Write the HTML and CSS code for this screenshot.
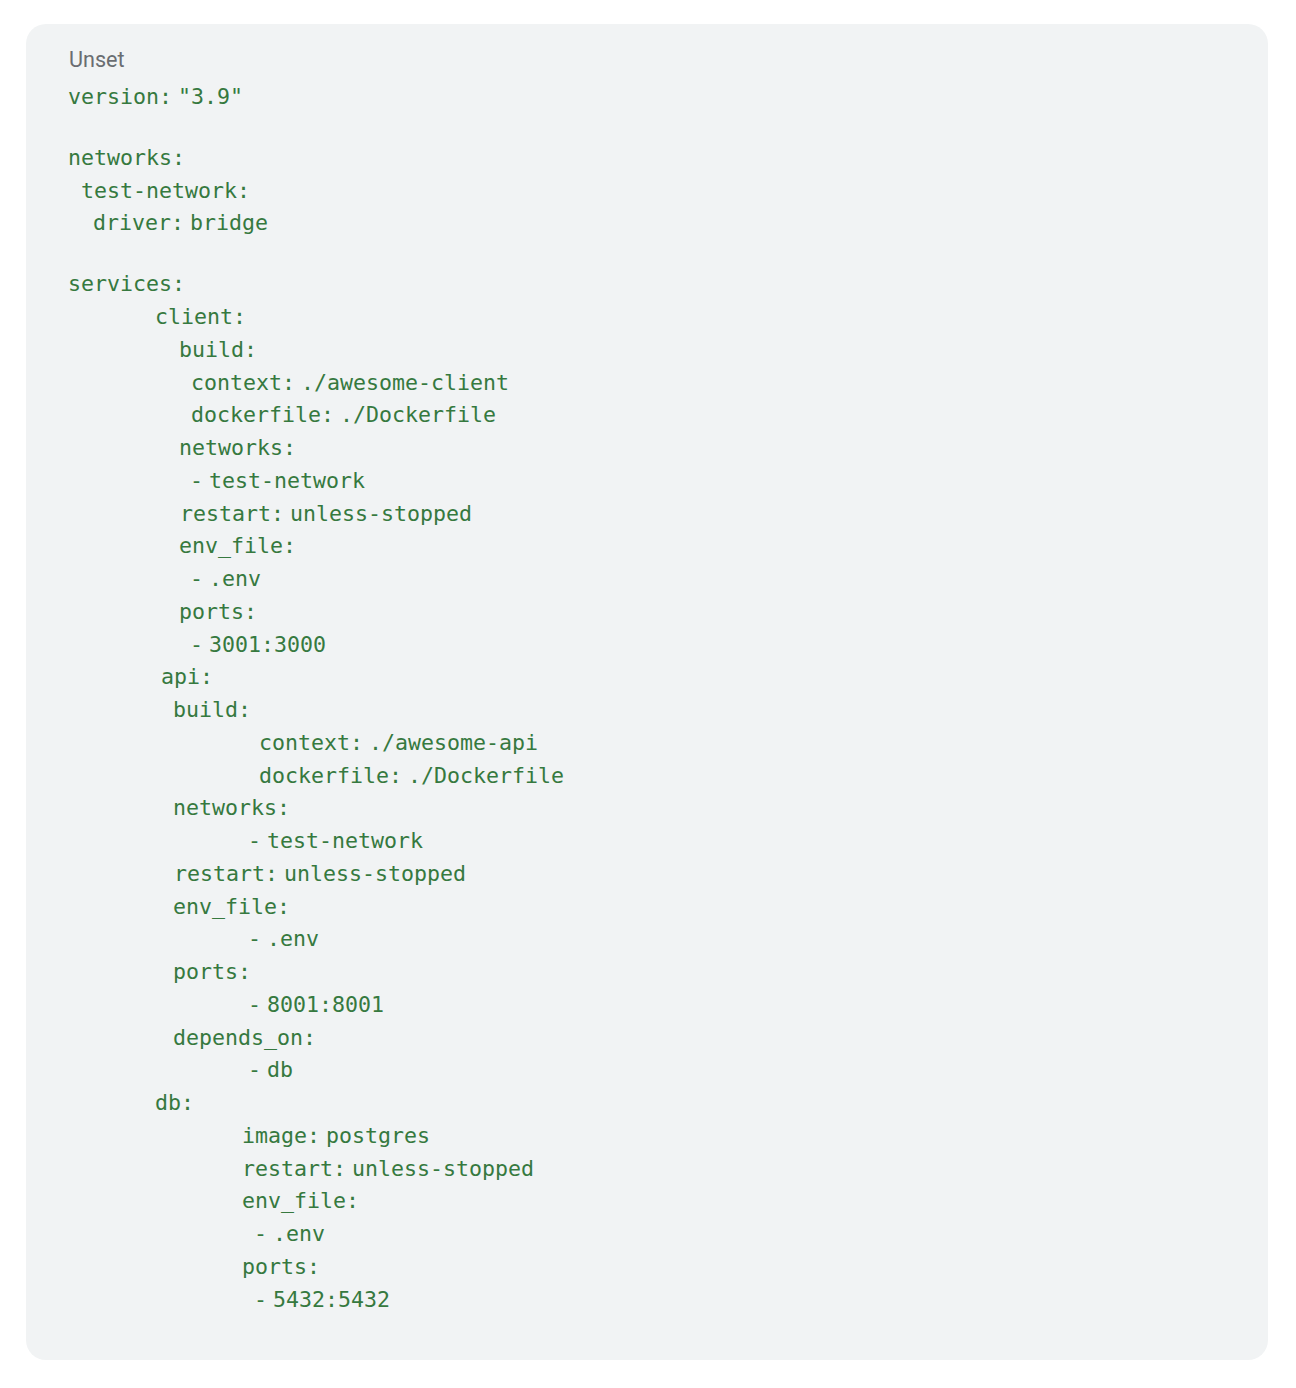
FILE: index.html
```html
<!DOCTYPE html>
<html lang="en">
<head>
<meta charset="utf-8">
<title>docker-compose.yml</title>
<link rel="stylesheet" href="styles.css">
</head>
<body>
<div class="page">
  <div class="card">
    <div class="lang">Unset</div>
    <pre class="code"><div class="ln i0"><span class="k">version:</span><span class="v">"3.9"</span></div><div class="blank"></div><div class="ln i0"><span class="k">networks:</span></div><div class="ln i13"><span class="k">test-network:</span></div><div class="ln i25"><span class="k">driver:</span><span class="v">bridge</span></div><div class="blank"></div><div class="ln i0"><span class="k">services:</span></div><div class="ln i87"><span class="k">client:</span></div><div class="ln i111"><span class="k">build:</span></div><div class="ln i123"><span class="k">context:</span><span class="v">./awesome-client</span></div><div class="ln i123"><span class="k">dockerfile:</span><span class="v">./Dockerfile</span></div><div class="ln i111"><span class="k">networks:</span></div><div class="ln i122"><span class="d">-</span><span class="v">test-network</span></div><div class="ln i112"><span class="k">restart:</span><span class="v">unless-stopped</span></div><div class="ln i111"><span class="k">env_file:</span></div><div class="ln i122"><span class="d">-</span><span class="v">.env</span></div><div class="ln i111"><span class="k">ports:</span></div><div class="ln i122"><span class="d">-</span><span class="v">3001:3000</span></div><div class="ln i93"><span class="k">api:</span></div><div class="ln i105"><span class="k">build:</span></div><div class="ln i191"><span class="k">context:</span><span class="v">./awesome-api</span></div><div class="ln i191"><span class="k">dockerfile:</span><span class="v">./Dockerfile</span></div><div class="ln i105"><span class="k">networks:</span></div><div class="ln i180"><span class="d">-</span><span class="v">test-network</span></div><div class="ln i106"><span class="k">restart:</span><span class="v">unless-stopped</span></div><div class="ln i105"><span class="k">env_file:</span></div><div class="ln i180"><span class="d">-</span><span class="v">.env</span></div><div class="ln i105"><span class="k">ports:</span></div><div class="ln i180"><span class="d">-</span><span class="v">8001:8001</span></div><div class="ln i105"><span class="k">depends_on:</span></div><div class="ln i180"><span class="d">-</span><span class="v">db</span></div><div class="ln i87"><span class="k">db:</span></div><div class="ln i174"><span class="k">image:</span><span class="v">postgres</span></div><div class="ln i174"><span class="k">restart:</span><span class="v">unless-stopped</span></div><div class="ln i174"><span class="k">env_file:</span></div><div class="ln i186"><span class="d">-</span><span class="v">.env</span></div><div class="ln i174"><span class="k">ports:</span></div><div class="ln i186"><span class="d">-</span><span class="v">5432:5432</span></div></pre>
  </div>
</div>
</body>
</html>
```
FILE: styles.css
```css
html, body {
  margin: 0;
  padding: 0;
  background: #ffffff;
}

.page {
  padding: 24px 28px 28px 26px;
}

.card {
  background: #f1f3f4;
  border-radius: 20px;
  padding: 22px 42px 43px 43px;
  height: 1336px;
  box-sizing: border-box;
}

.lang {
  font-family: Roboto, "Liberation Sans", sans-serif;
  font-size: 21.6px;
  line-height: 28px;
  color: #6a6d71;
  margin-bottom: 7px;
}

.code {
  margin: 0;
  margin-left: -1px;
  font-family: "DejaVu Sans Mono", "Liberation Mono", monospace;
  font-size: 21.6px;
  line-height: 32.76px;
  color: #36793f;
  white-space: pre;
}

.ln {
  height: 32.76px;
}

.blank {
  height: 28.2px;
}

.v {
  margin-left: 6px;
}

.i0 { padding-left: 0; }
.i13 { padding-left: 13px; }
.i25 { padding-left: 25px; }
.i87 { padding-left: 87px; }
.i93 { padding-left: 93px; }
.i105 { padding-left: 105px; }
.i106 { padding-left: 106px; }
.i111 { padding-left: 111px; }
.i112 { padding-left: 112px; }
.i122 { padding-left: 122px; }
.i123 { padding-left: 123px; }
.i174 { padding-left: 174px; }
.i180 { padding-left: 180px; }
.i186 { padding-left: 186px; }
.i191 { padding-left: 191px; }
```
